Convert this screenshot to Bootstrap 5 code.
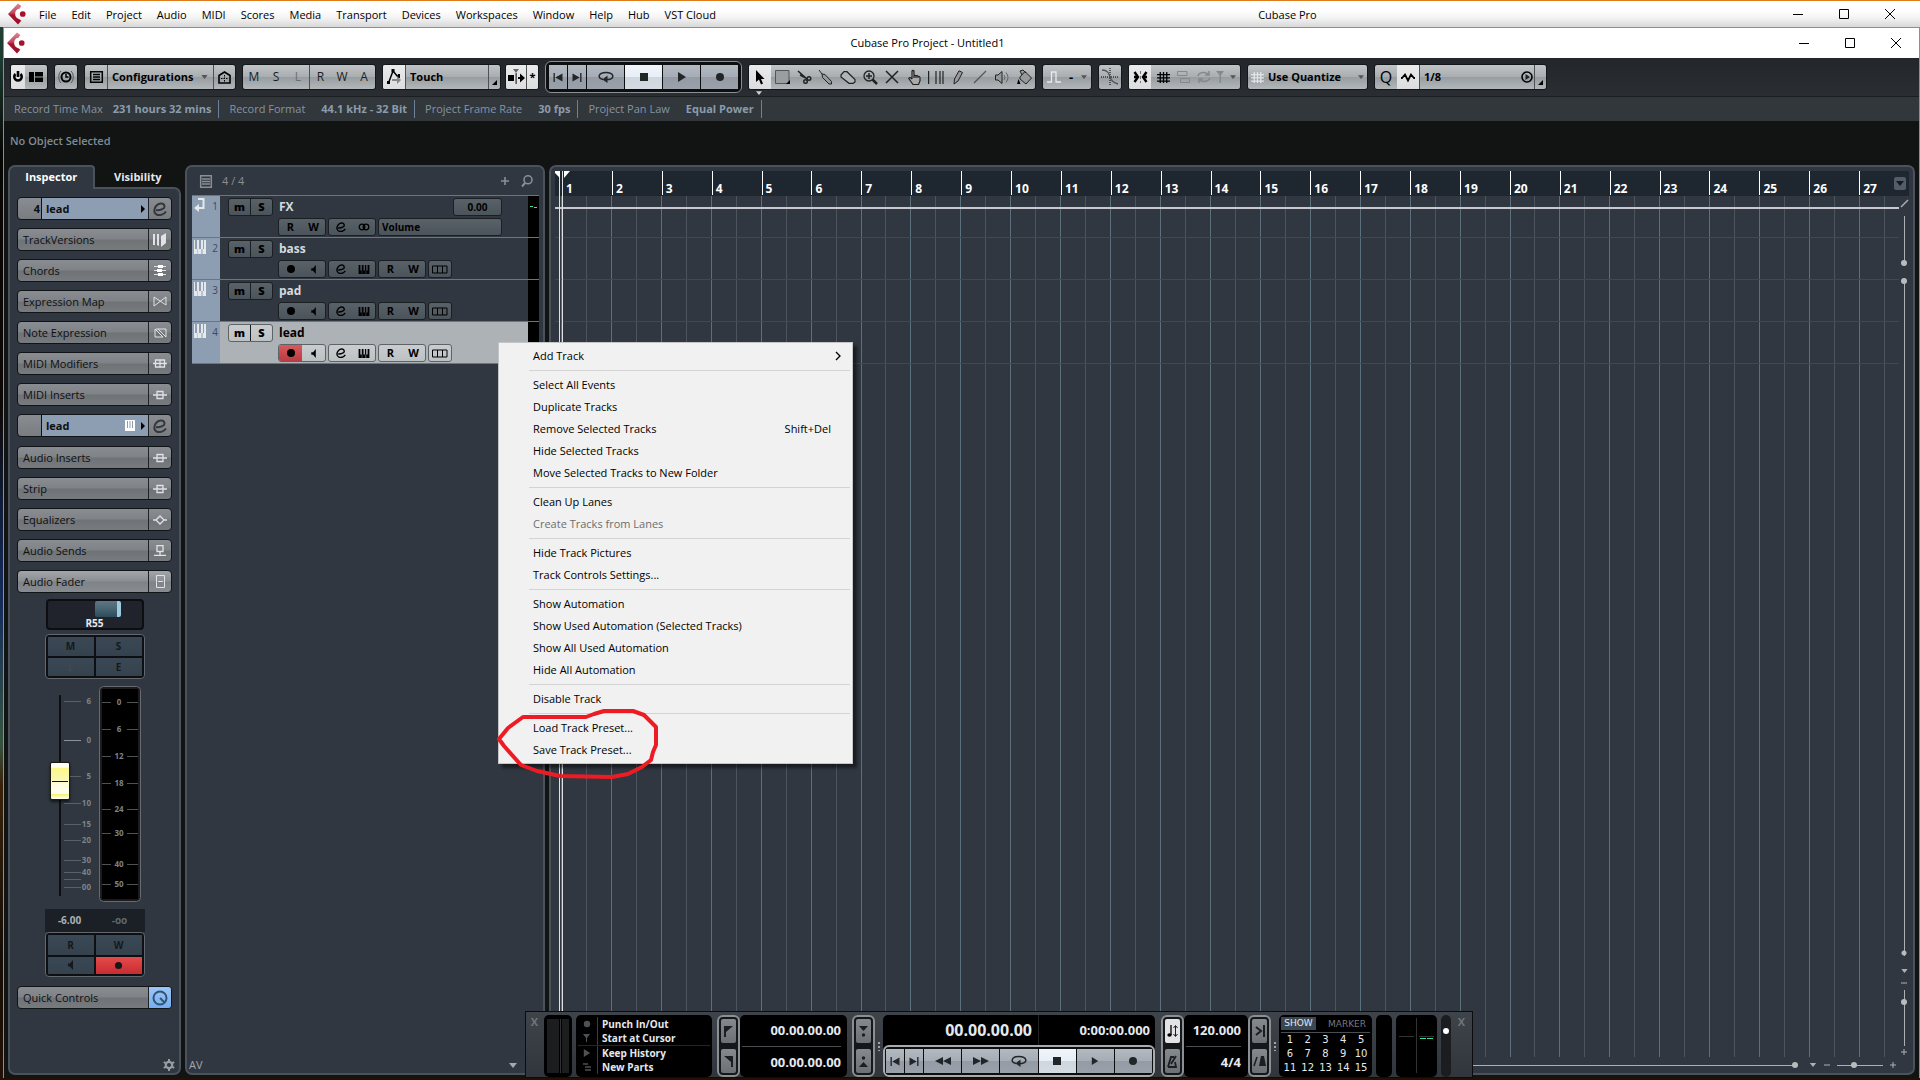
<!DOCTYPE html>
<html lang="en">
<head>
<meta charset="utf-8">
<meta name="viewport" content="width=device-width, initial-scale=1">
<title>Cubase Pro Project - Untitled1</title>
<link href="https://cdn.jsdelivr.net/npm/bootstrap@5.3.0/dist/css/bootstrap.min.css" rel="stylesheet">
<style>
:root{--panel:#303740;--edge:#4a525c;--orange:#e07b1a;--ui:"Open Sans","Noto Sans",sans-serif}
html,body{height:100%}
body{font:11px/16px var(--ui);color:#000;background:#160b08;overflow:hidden}
button,select,input{font:inherit;color:inherit;border:0;padding:0;margin:0;background:none;border-radius:0}
a{color:inherit;text-decoration:none}
svg{display:block;flex:none;overflow:visible}
b,.fw-b{font-weight:700}
select{appearance:none}
.s{fill:none;stroke:currentColor}
/* window frames */
.app-bar{height:27px;border-top:1px solid var(--orange);background:linear-gradient(#fff 35%,#f3f3f3 65%,#d8d8d8)}
.menu-list{gap:15px;padding-left:12px;padding-top:2px}
.app-name{padding:2px 0 0 84px}
.cap-btn{width:46px;height:26px;display:flex;align-items:center;justify-content:center}
.desk{background:linear-gradient(#1f4034,#1d3b30 3%,#060605 12%,#0d0805 36%,#0f1b38 45%,#142d5e 55%,#35543f 68%,#3a2208 72%,#150d05 88%,#241005);padding-left:3px;padding-bottom:2px}
.proj{border:solid var(--orange);border-width:1px 1px 0 1px;background:#121413}
.proj-title{height:30px;background:#fff}
/* toolbar */
.tools{height:39px;padding:0 6px;gap:6px;background:linear-gradient(#23272b,#2a2e32);border-bottom:1px solid #1b1e21}
.grp{display:flex;height:26px;border:1px solid #14171a;border-radius:3px;background:linear-gradient(#c0c4c7,#a9aeb1 48%,#979da0 52%,#b2b7ba);overflow:hidden}
.grp>button{display:flex;align-items:center;justify-content:center;width:22px}
.grp .on{background:linear-gradient(#e9eaec,#dcdddf)}
.grp .cut{border-left:1px solid #4c5155}
.letters{font-size:12px;color:#1b1d1f}
.corner{align-items:flex-end!important;padding-bottom:4px}
.grp .w12{width:12px}.grp .w14{width:14px}.grp .w20{width:20px}
.drop{display:flex;align-items:center;position:relative}
.drop select{font-weight:700;padding-left:4px;height:24px;outline:0}
.drop svg.arr{position:absolute;right:5px;pointer-events:none}
.pod{display:flex;padding:3px;border:1px solid #8b8f92;border-radius:6px;background:#0c0e10;gap:1px;height:32px}
.pod button{display:flex;align-items:center;justify-content:center;background:linear-gradient(#b3b9c1,#a6adb6 48%,#949ba4 52%,#9aa1aa);color:#222629;width:37px}
.pod .nar{width:18px}
.pod .lit{background:linear-gradient(#f0f5fb,#e8eef6 48%,#cfd6de 52%,#d4dbe3)}
.pod.wide{padding:2px 1px;border-width:2px;border-color:#a9acaf}
.pod.wide button:not(.nar){flex:1}
.info{height:24px;background:#32373c;color:#8295a3;padding-left:9px}
.info>div{display:flex;align-items:center;gap:16px;height:18px;border-right:1px solid #6a8299;padding:0 7px 0 1px;margin-right:9px}
.info>div:first-child{gap:10px}
.info b{color:#8a9cab}
.sel-line{height:44px;padding:12px 0 0 6px;color:#7d8c96;font-weight:600}
/* panels */
.work{padding:0 4px 3px 4px;gap:4px}
.pane{background:var(--panel);border:2px solid var(--edge);border-radius:7px}
.insp{width:173px}.tracks{width:360px}
.tabs{height:24px;margin-bottom:-2px;z-index:1}
.tabs a{display:block;text-align:center;width:88px;font-weight:700;color:#e6e9ec;line-height:24px;height:24px}
.tabs a.sel{background:var(--panel);border:2px solid var(--edge);border-bottom:0;border-radius:7px 4px 0 0;line-height:20px;color:#fff}
.insp .pane{border-top-left-radius:0;padding:8px 7px 0}
.stack{gap:8px}
.sec{display:flex;height:23px;border:1px solid #111417;border-radius:4px;overflow:hidden;background:linear-gradient(#898d91,#7f8387 48%,#6f7376 52%,#777b7f);color:#0d0f11}
.sec.brk{margin-top:1px}
.sec button:first-child{flex:1;text-align:left;padding-left:5px;line-height:20px}
.sec button:last-child{width:23px;border-left:1px solid #202326;display:flex;align-items:center;justify-content:center;color:#dfe3e6}
.sec.hd{background:linear-gradient(#898d91,#797d81)}
.sec.hd>span{width:23px;text-align:right;padding-right:1px;font-weight:700;line-height:22px}
.sec.hd button.nm{flex:1;background:#8d9eb2;border-left:1px solid #111;font-weight:700;text-align:left;padding:0 3px 0 4px;display:flex;align-items:center}
.sec.hd button:last-child{color:#33383c}
.sec.hi{background:linear-gradient(#a2a5a9,#8b8e92 48%,#7f8286 52%,#888b8f)}
.strip{width:100px;margin:6px auto 0}
.panbox{height:31px;margin:0 1px;border:2px solid #0c0e11;border-radius:4px;background:#20232b;color:#e6e9ec;font-weight:700;font-size:10px;line-height:12px;text-align:center}
.panbox i{display:block;width:26px;height:16px;margin-left:47px;border-radius:2px;border-right:4px solid #9fcbe0;background:linear-gradient(#5f7683,#486473 50%,#2c4c5c)}
.quad{display:grid;grid-template-columns:1fr 1fr;gap:2px;background:#0d0f12;border:1px solid #62686d;border-radius:4px;padding:2px;height:45px}
.quad button{background:linear-gradient(#3a4855,#35424e);color:#15181b;font-weight:700;font-size:10px;line-height:12px;display:flex;align-items:center;justify-content:center}
.quad .rec{background:linear-gradient(#e44a4c,#c82c30)}
.fader{height:217px}
.scale-txt{font:700 8px var(--ui);fill:#7c8388}
.vrange{appearance:none;-webkit-appearance:none;writing-mode:vertical-lr}
.vol{width:20px;height:201px;margin:9px 0 0 5px;background:linear-gradient(#0d0f11,#0d0f11) center/2px 100% no-repeat}
.vol::-webkit-slider-thumb{-webkit-appearance:none;width:20px;height:38px;border:1px solid #1b1b10;border-radius:2px;box-shadow:0 2px 3px #0009;background:linear-gradient(transparent 18px,#111 18px,#111 19px,transparent 19px) center/16px 100% no-repeat,linear-gradient(#fffff4 12%,#fbf88a 14%,#f9f7b0 45%,#fffee0 60%,#fffff0 85%,#f6f26e 87%,#fff)}
.readout{height:23px;margin-top:6px;background:#1b2026;color:#aab0b4;font-weight:700;font-size:10px;line-height:23px}
/* track list */
.th{height:28px;padding:0 10px 0 13px;color:#8a8f94}
.trk{height:42px;margin:0 4px 0 5px;border-top:1px solid #6f757a;display:flex}
.clr{width:28px;background:#8d9eb2;color:#3f4b58;padding:2px 2px 0 2px;font-size:10px}
.trk .lane{flex:1;padding:2px 26px 0 8px}
.trk .vu{width:11px;background:#000;padding-top:10px}
.trk b{font-size:12px;color:#d5dade;line-height:18px;padding-left:6px}
.bt{display:flex;height:18px;border:1px solid #1b1f22;border-radius:3px;background:linear-gradient(#5a6269,#4c545b);color:#000;font-weight:700;font-size:11px;line-height:14px;overflow:hidden}
.bt button,.bt .cell{flex:1;display:flex;align-items:center;justify-content:center}
.bt button+button.sp{border-left:1px solid #1b1f22}
.bt .cell,.bt select{font-size:10px}
.ms{width:45px}.pr{width:48px}.one{width:24px}
.ms button{font-weight:800}
.sub{gap:2px;padding:2px 0 0 50px}
.trk.act .lane{background:#adb2b6}
.trk.act b{color:#000}
.trk.act .bt{background:linear-gradient(#c9cdd0,#bcc1c4);border-color:#5e6367}
.trk.act .rec{background:linear-gradient(#d8595e,#b93c42)}
/* arrangement */
.arr-pane{padding:4px 4px 0;min-width:0}
.ruler{height:25px;background:#1e262f;padding-left:7px;color:#fff;font:700 12px/15px var(--ui)}
.ruler div{flex:1 1 0;border-left:1px solid #fff;height:24px;padding:10px 0 0 3px;min-width:0}
.ruler div:first-child{border-color:transparent}
.r-menu{right:3px;top:6px;width:12px;height:13px;background:#525d69;border-radius:2px}
.bars{inset:0;padding-left:6px}
.bars div{flex:50 1 0;border-left:1px solid #5c707c;background:linear-gradient(#4a5560,#4a5560) 50% 0/1px 100% no-repeat}
.bars div:last-child{flex-grow:40;background-position:62% 0}
.ln{height:42px;border-bottom:1px solid #3f4953}
.ln:first-child{padding-top:11px}
.ln i{display:block;height:2px;background:#c8c9d0}
.cursor{left:4px;top:0;bottom:0;width:4px;border:solid #dfe1e2;border-width:0 1px;z-index:1}
.vbar{width:10px;color:#adb0b3;padding-top:4px;padding-bottom:2px}
.zs{appearance:none;-webkit-appearance:none;height:6px;background:linear-gradient(#adb0b3,#adb0b3) center/100% 1px no-repeat}
.zs.vrange{width:6px;background-size:1px 100%}
.zs.ends{background:radial-gradient(circle at 3px 3px,#b9bbbd 2px,transparent 3px) 0 100%/6px 6px no-repeat,linear-gradient(#adb0b3,#adb0b3) center/1px 100% no-repeat}
.zs::-webkit-slider-thumb{-webkit-appearance:none;width:6px;height:6px;border-radius:50%;background:#b9bbbd}
.hbar{height:16px;color:#adb0b3;gap:7px;padding-right:13px}
/* context menu */
.ctx{left:498px;top:342px;width:355px;background:#f1f1f1;border:1px solid #c3c5c7;box-shadow:4px 4px 3px #0007;padding:2px 2px 2px 30px;z-index:5}
.ctx button{display:flex;justify-content:space-between;width:100%;height:22px;line-height:21px;padding:0 19px 0 4px}
.ctx hr{margin:3px 0;border:0;height:1px;background:#d3d3d3;opacity:1}
.ctx .off{color:#6d6d6d}
.mark-ring{left:492px;top:704px;z-index:6;pointer-events:none}
/* transport panel */
.tp{left:525px;bottom:2px;height:67px;background:linear-gradient(#3f444a,#31363c);border:1px solid #0b0c0e;padding:3px 4px 1px 2px;z-index:4;color:#e4e9ee}
.blk{background:#000;border-radius:5px;height:62px}
.tp .x{width:13px;font-weight:700;color:#6e757b;height:14px;line-height:14px}
.duo{width:23px;height:62px;border:2px solid #8b8f92;border-radius:6px;background:#15181b;padding:2px;display:flex;flex-direction:column;justify-content:space-between}
.duo button{height:24px;border-radius:2px;background:linear-gradient(#858a8f,#6c7176);color:#1c1f22;display:flex;align-items:center;justify-content:center}
.duo button.lit{background:#e2e3e4}
.num{font:700 13px/31px "Open Sans",sans-serif;text-align:right}
.num hr{margin:0;border:0;height:1px;background:#4a4e52;opacity:1}
.num .big{width:156px;font-size:16px;border-right:1px solid #222;padding-right:6px}
.opt{width:136px;padding:2px 2px;font-weight:700;font-size:10px;line-height:14px}
.opt>div{height:28px;padding-left:5px}
.opt .ics{width:15px;border-right:1px solid #3a3d40;color:#4e5255;display:flex;flex-direction:column;justify-content:space-around;margin-right:4px}
.pad{width:93px;padding:2px;font:10px/14px "DejaVu Sans",sans-serif}
.pad .nums{display:grid;grid-template-columns:repeat(5,1fr);text-align:center;border-top:1px solid #4a4e52}
.pad .hd1{font-size:9px;line-height:13px;height:15px}
</style>
</head>
<body class="d-flex flex-column position-relative">
<svg width="0" height="0" class="position-absolute">
<defs>
<linearGradient id="lg" x1="0" y1="0" x2="0" y2="1"><stop offset="0" stop-color="#d98a96"/><stop offset=".45" stop-color="#c4475c"/><stop offset=".55" stop-color="#a5122c"/><stop offset="1" stop-color="#9c1029"/></linearGradient>
<symbol id="logo" viewBox="0 0 20 22"><path fill="url(#lg)" d="M10.500 0L14 2.500L12 5.500C9 6 7.500 8 7.500 11C7.500 14 9.500 16 12 16.500L14 18L10.500 22L0 11Z"/><circle cx="15.500" cy="11" r="3" fill="#a5122c"/></symbol>
<symbol id="e" viewBox="0 0 14 14"><path fill="none" stroke="currentColor" stroke-width="2" d="M3 8.300C8 8.500 12 6.500 11.500 4C11 1 6.500 .5 3.500 3.500C.5 6.500 .5 11.500 4 12.700C7 13.700 11 12.500 13 9.500"/></symbol>
<symbol id="keys" viewBox="0 0 12 14"><path fill="#e6e9ec" d="M0 0H1V9H3V0H5V9H7V0H9V9H10V0H12V14H8.500V9H7.500V14H4V9H3.600V14H0Z"/></symbol>
<symbol id="keysb" viewBox="0 0 12 10"><path fill="currentColor" d="M0 0H2V6H3.500V0H5.500V6H7V0H8.500V6H10V0H12V10H8.400V6H7.800V10H4V6H3.600V10H0Z"/></symbol>
<symbol id="spk" viewBox="0 0 8 10"><path fill="currentColor" d="M1 3.500H3L6 0V10L3 6.500H1Z"/></symbol>
<symbol id="dot" viewBox="0 0 10 10"><circle cx="5" cy="5" r="4" fill="currentColor"/></symbol>
<symbol id="down" viewBox="0 0 8 5"><path fill="currentColor" d="M0 0H8L4 5Z"/></symbol>
<symbol id="ins" viewBox="0 0 14 10"><path stroke-width="1.300" fill="none" stroke="currentColor" d="M0 5H14M4 1.500H10V8.500H4Z"/></symbol>
<symbol id="cells" viewBox="0 0 16 9"><path fill="none" stroke="#000" d="M.5 1H15V8H.5ZM5.500 1V8M10.500 1V8"/></symbol>
<symbol id="tstart" viewBox="0 0 10 10"><path fill="currentColor" d="M0 0H1.500V10H0ZM2 5L10 .5V9.500Z"/></symbol>
<symbol id="tend" viewBox="0 0 10 10"><path fill="currentColor" d="M8.500 0H10V10H8.500ZM8 5L0 .5V9.500Z"/></symbol>
<symbol id="cyc" viewBox="0 0 16 12"><path fill="none" stroke="currentColor" stroke-width="1.500" d="M5 8.500C-1 7.500 0 1.500 8 1.500S17 7.500 11 8.500H9"/><path fill="currentColor" d="M9.500 4.500V12L4.500 8.500Z"/></symbol>
<symbol id="play" viewBox="0 0 8 10"><path fill="currentColor" d="M0 0L8 5L0 10Z"/></symbol>
<symbol id="hash" viewBox="0 0 14 14"><path fill="none" stroke="currentColor" stroke-width="1.400" d="M3.500 1V13M7 1V13M10.500 1V13M0 4H14M0 7.500H14M0 11H14" /></symbol>
<symbol id="crn" viewBox="0 0 5 5"><path fill="#000" d="M5 0V5H0Z"/></symbol>
</defs>
</svg>

<header class="app-bar d-flex align-items-center flex-shrink-0">
  <svg width="19" height="22" class="ms-2"><use href="#logo"/></svg>
  <nav class="menu-list d-flex">
    <a href="#">File</a><a href="#">Edit</a><a href="#">Project</a><a href="#">Audio</a><a href="#">MIDI</a><a href="#">Scores</a><a href="#">Media</a><a href="#">Transport</a><a href="#">Devices</a><a href="#">Workspaces</a><a href="#">Window</a><a href="#">Help</a><a href="#">Hub</a><a href="#">VST Cloud</a>
  </nav>
  <div class="app-name flex-grow-1 text-center">Cubase Pro</div>
  <div class="d-flex" style="margin-right:7px">
    <button class="cap-btn" aria-label="Minimize"><svg width="10" height="10"><path class="s" d="M0 5.500H10"/></svg></button>
    <button class="cap-btn" aria-label="Maximize"><svg width="10" height="10"><path class="s" d="M.5 .5H9.500V9.500H.5Z"/></svg></button>
    <button class="cap-btn" aria-label="Close"><svg width="10" height="10"><path class="s" d="M0 0L10 10M10 0L0 10"/></svg></button>
  </div>
</header>

<div class="desk flex-grow-1 d-flex flex-column" style="min-height:0">
<main class="proj flex-grow-1 d-flex flex-column" style="min-height:0">
  <div class="proj-title d-flex align-items-center flex-shrink-0">
    <svg width="19" height="22" style="margin-left:3px"><use href="#logo"/></svg>
    <div class="flex-grow-1 text-center ps-5">Cubase Pro Project - Untitled1</div>
    <div class="d-flex">
      <button class="cap-btn" aria-label="Minimize"><svg width="10" height="10"><path class="s" d="M0 5.500H10"/></svg></button>
      <button class="cap-btn" aria-label="Maximize"><svg width="10" height="10"><path class="s" d="M.5 .5H9.500V9.500H.5Z"/></svg></button>
      <button class="cap-btn" aria-label="Close"><svg width="10" height="10"><path class="s" d="M0 0L10 10M10 0L0 10"/></svg></button>
    </div>
  </div>

  <div class="tools d-flex align-items-center flex-shrink-0">
    <div class="grp"><button class="on w14" aria-label="Activate"><svg width="10" height="12"><path class="s" stroke-width="2.600" d="M2.500 3A3.700 3.700 0 1 0 7.500 3M5 0V6"/></svg></button><button aria-label="Layout"><svg width="14" height="10"><path d="M0 0H5V10H0ZM6 0H14V4.500H6ZM6 5.500H14V10H6Z"/></svg></button></div>
    <div class="grp"><button aria-label="Constrain delay"><svg width="16" height="14"><circle cx="8" cy="7" r="4.500" class="s" stroke-width="2"/><path class="s" stroke-width="1.500" d="M8 4V7H10.500"/><path class="s" style="stroke:#555" d="M3 1C0 4 0 10 3 13M13 1C16 4 16 10 13 13"/></svg></button></div>
    <div class="grp"><button aria-label="Window layout"><svg width="13" height="12"><path class="s" stroke-width="1.500" d="M.7 .7H12.300V11.300H.7ZM3 3.500H10M3 6H10M3 8.500H10"/></svg></button>
      <div class="drop cut"><select aria-label="Configurations" style="width:105px"><option>Configurations</option></select><svg class="arr" width="7" height="4" viewBox="0 0 8 5" color="#555"><use href="#down"/></svg></div>
      <button class="cut" aria-label="Home"><svg width="13" height="13"><path class="s" stroke-width="1.600" d="M1 12V4.500L6.500 1L12 4.500V12Z"/><path class="s" stroke-dasharray="1.500 1" d="M3 7.500H10M6.500 4V11"/></svg></button></div>
    <div class="grp letters"><button>M</button><button>S</button><button style="color:#6a6f73">L</button><button class="cut">R</button><button>W</button><button>A</button></div>
    <div class="d-flex" style="gap:4px">
      <div class="grp"><button class="on" aria-label="Automation mode"><svg width="15" height="16"><path class="s" stroke-width="1.500" d="M1.500 14L6 2L11 8"/><path d="M0 12H3V15H0ZM4.500 0H7.500V3H4.500ZM11 5H13V9H10Z"/><path fill="#888" d="M5 10H10V7L14 11L10 15V12H5Z"/></svg></button>
        <div class="drop cut"><select aria-label="Automation" style="width:82px"><option>Touch</option></select></div><button class="cut w12 corner" aria-label="Automation panel"><svg width="5" height="5"><use href="#crn"/></svg></button></div>
      <div class="grp"><button class="on w20" aria-label="Auto-scroll"><svg width="17" height="16"><path d="M0 6H6V12H0ZM7.600 4H8.600V15H7.600ZM10 8H12V4.500L17 9L12 13.500V10H10Z"/><path fill="#666" d="M5 0H11L8 4Z"/></svg></button><button class="on cut w12 fw-b">*</button></div>
    </div>
    <div class="pod"><button class="nar" aria-label="Go to start"><svg width="10" height="9"><use href="#tstart"/></svg></button><button class="nar" aria-label="Go to end"><svg width="10" height="9"><use href="#tend"/></svg></button><button aria-label="Cycle"><svg width="16" height="12"><use href="#cyc"/></svg></button><button class="lit" aria-label="Stop"><svg width="8" height="8"><path fill="#222629" d="M0 0H8V8H0Z"/></svg></button><button aria-label="Play"><svg width="8" height="10"><use href="#play"/></svg></button><button aria-label="Record"><svg width="10" height="10"><use href="#dot"/></svg></button></div>
    <div class="position-relative"><div class="grp" style="color:#222">
      <button class="on" aria-label="Object selection"><svg width="10" height="15"><path fill="#000" d="M1 0V12L4 9.500L6 14.500L8 13.500L6 9H9.500Z"/></svg></button>
      <button aria-label="Range"><svg width="15" height="14"><path fill="#9a9ea1" stroke="#555" d="M.5 .5H14V13.500H.5Z"/><path d="M15 10V14H11Z"/></svg></button>
      <button aria-label="Split"><svg width="15" height="14"><path class="s" stroke-width="1.600" d="M1 1L10 9M3 5L9 8"/><circle class="s" cx="12" cy="8.500" r="1.800" stroke-width="1.400"/><circle class="s" cx="8.500" cy="11.500" r="1.800" stroke-width="1.400"/></svg></button>
      <button aria-label="Glue"><svg width="14" height="15"><path class="s" d="M0 0L3 4L6 4.500L12.500 11.500V14H10L3.500 7.500L3 4" style="fill:#999"/></svg></button>
      <button aria-label="Erase"><svg width="16" height="13"><path class="s" stroke-width="1.200" d="M1 4L4 .7H7L15 8.500V11L13 12.300H9L1 6Z" style="fill:#b0b4b6"/></svg></button>
      <button aria-label="Zoom"><svg width="15" height="15"><circle class="s" cx="6" cy="6" r="5" stroke-width="1.300"/><path class="s" stroke-width="1.500" d="M3 6H9M6 3V9"/><path class="s" stroke-width="2.500" d="M9.500 9.500L14 14"/></svg></button>
      <button aria-label="Mute"><svg width="12" height="12"><path class="s" stroke-width="1.500" d="M0 0L12 12M12 0L0 12"/></svg></button>
      <button aria-label="Comp"><svg width="13" height="15"><path class="s" stroke-width="1.200" d="M4 9V1Q5 0 6 1V6Q7 5 8 6Q9 5 10 6.500Q12 6 12 8V11L10.500 14.500H5L.8 8.500Q1.500 7 3 8L4 9M6 6V8M8 6V8M10 7V8" style="fill:#aaa"/></svg></button>
      <button aria-label="Time warp"><svg width="16" height="13"><path class="s" stroke-width="1.200" d="M.6 0V13M8 0V13M12 0V13M15 0V13"/></svg></button>
      <button aria-label="Draw"><svg width="11" height="15"><path class="s" style="fill:#999" d="M1 14L1.500 9L6 .8L9.500 2.500L5 11Z"/></svg></button>
      <button aria-label="Line"><svg width="12" height="12"><path class="s" stroke-width="1.300" style="stroke:#555" d="M0 12L12 0"/></svg></button>
      <button aria-label="Play tool"><svg width="15" height="13"><path class="s" style="fill:#999" d="M.5 4H3L7 .5V12.500L3 9H.5Z"/><path class="s" style="stroke:#666" d="M9 4Q11 6.500 9 9M11 1.500Q15 6.500 11 11.500"/></svg></button>
      <button aria-label="Color"><svg width="15" height="15"><path class="s" style="fill:#999" d="M3 7L8 1.500L14.500 8L9 14L3 9ZM5 5L3 1L6 0L9 3"/><path d="M0 14L1.500 9L3.500 14Z"/></svg></button>
    </div><svg width="6" height="4" class="position-absolute" color="#cdd2dc" style="left:8px;top:27px"><use href="#down"/></svg></div>
    <div class="grp"><button aria-label="Color menu"><svg width="14" height="12"><path class="s" style="stroke:#e8eaec" stroke-width="1.300" d="M0 11H4.500V1H9V11H14"/></svg></button><button class="w12 fw-b" style="font-size:13px">-</button><button class="w14" aria-label="Colors"><svg width="6" height="4" color="#555"><use href="#down"/></svg></button></div>
    <div class="grp"><button aria-label="Snap zero crossing"><svg width="18" height="18"><path class="s" stroke-dasharray="1 1" d="M9 0V18M0 9H18"/><path class="s" style="stroke:#555" stroke-width="1.300" d="M1 2C7 2 8 6 9 9S13 15 17 16"/></svg></button></div>
    <div class="grp"><button class="on" aria-label="Snap"><svg width="13" height="12"><path class="s" stroke-width="2.400" d="M.5 1L4 6L.5 11M12.500 1L9 6L12.500 11M0 6H4M9 6H13"/><path class="s" style="stroke:#777" stroke-dasharray="3 2" d="M6.500 0V12"/></svg></button><button style="width:25px" aria-label="Grid"><svg width="13" height="13"><use href="#hash"/></svg></button><button class="w14" style="color:#85898c" aria-label="Events"><svg width="13" height="12"><path class="s" d="M.5 .5H10V4.500H.5ZM3.500 7.500H12.500V11.500H3.500Z"/></svg></button><button class="w20 ms-1" style="color:#85898c" aria-label="Shuffle"><svg width="14" height="12"><path class="s" stroke-width="1.500" d="M1 5C2 1 9 0 12 4M13 7C11 11 5 12 2 8M12 0V4H8M2 12V8H6"/></svg></button><button class="w12" style="color:#85898c" aria-label="Cursor"><svg width="8" height="12"><path fill="currentColor" d="M0 0H8L5 4V12H3.500V4Z"/></svg></button><button class="w14" aria-label="Snap type"><svg width="6" height="4" color="#555"><use href="#down"/></svg></button></div>
    <div class="grp drop"><svg width="13" height="13" color="#e2e5e8" style="margin-left:3px"><use href="#hash"/></svg><select aria-label="Grid type" style="width:103px"><option>Use Quantize</option></select><svg class="arr" width="6" height="4" color="#555" style="right:3px"><use href="#down"/></svg></div>
    <div class="grp"><button style="font-size:16px">Q</button><button class="on" aria-label="Iterative"><svg width="14" height="9"><path class="s" stroke-width="1.800" d="M0 5H1L4 1.500L7 7.500L10 1.500L13 5H14"/></svg></button><div class="drop cut"><select aria-label="Quantize" style="width:100px"><option>1/8</option></select></div><button class="w14" aria-label="Apply"><svg width="12" height="12"><circle cx="6" cy="6" r="5" class="s" stroke-width="1.600"/><path fill="#222" d="M4.500 3L9 6L4.500 9Z"/></svg></button><button class="cut w12 corner" aria-label="Quantize panel"><svg width="5" height="5"><use href="#crn"/></svg></button></div>
  </div>

  <div class="info d-flex align-items-center flex-shrink-0">
    <div>Record Time Max<b>231 hours 32 mins</b></div>
    <div>Record Format<b>44.1 kHz - 32 Bit</b></div>
    <div>Project Frame Rate<b>30 fps</b></div>
    <div>Project Pan Law<b>Equal Power</b></div>
  </div>
  <div class="sel-line flex-shrink-0">No Object Selected</div>

  <div class="work d-flex flex-grow-1" style="min-height:0">
    <!-- Inspector -->
    <aside class="insp d-flex flex-column flex-shrink-0">
      <nav class="tabs d-flex position-relative"><a href="#" class="sel">Inspector</a><a href="#" class="flex-grow-1">Visibility</a></nav>
      <div class="pane flex-grow-1 d-flex flex-column">
        <div class="stack d-flex flex-column">
          <div class="sec hd"><span>4</span><button class="nm"><span class="flex-grow-1">lead</span><svg width="4" height="8"><path d="M0 0L4 4L0 8Z"/></svg></button><button aria-label="Edit instrument"><svg width="14" height="14"><use href="#e"/></svg></button></div>
          <div class="sec"><button>TrackVersions</button><button aria-label="Versions"><svg width="14" height="14"><path fill="#dfe3e6" d="M0 1H2V12H0ZM4 1H6V13L4 12ZM8 3L13 0V10L8 14Z"/></svg></button></div>
          <div class="sec"><button>Chords</button><button aria-label="Chords"><svg width="12" height="13"><path class="s" d="M0 2.500H12M0 6.500H12M0 10.500H12"/><path fill="#fff" d="M4 1H9V4H4ZM3 5H8V8H3ZM4 9H9V12H4Z"/></svg></button></div>
          <div class="sec"><button>Expression Map</button><button aria-label="Expression"><svg width="14" height="11"><path class="s" d="M1 1V10L13 1V9Z"/></svg></button></div>
          <div class="sec"><button>Note Expression</button><button aria-label="Note expression"><svg width="13" height="10"><path class="s" d="M1 1V9H9ZM2 1H12V9L4 1"/></svg></button></div>
          <div class="sec"><button>MIDI Modifiers</button><button aria-label="Modifiers"><svg width="14" height="9"><path class="s" stroke-width="1.300" d="M0 4.500H14M2.500 1H11.500V8H2.500ZM7 1V8"/></svg></button></div>
          <div class="sec"><button>MIDI Inserts</button><button aria-label="MIDI inserts"><svg width="14" height="10"><use href="#ins"/></svg></button></div>
          <div class="sec hd"><span></span><button class="nm"><span class="flex-grow-1">lead</span><svg width="10" height="11" style="margin-right:6px"><path fill="#fff" d="M0 0H10V11H0Z"/><path stroke="#8d9eb2" d="M2.500 1V8M5 1V8M7.500 1V8"/></svg><svg width="4" height="8"><path d="M0 0L4 4L0 8Z"/></svg></button><button aria-label="Edit channel"><svg width="14" height="14"><use href="#e"/></svg></button></div>
          <div class="sec brk"><button>Audio Inserts</button><button aria-label="Audio inserts"><svg width="14" height="10"><use href="#ins"/></svg></button></div>
          <div class="sec"><button>Strip</button><button aria-label="Strip"><svg width="14" height="10"><use href="#ins"/></svg></button></div>
          <div class="sec"><button>Equalizers</button><button aria-label="EQ"><svg width="14" height="10"><path class="s" stroke-width="1.300" d="M0 5H3L7 1L11 5L7 9L3 5M11 5H14"/></svg></button></div>
          <div class="sec"><button>Audio Sends</button><button aria-label="Sends"><svg width="12" height="11"><path class="s" stroke-width="1.300" d="M3 .6H9V6.500H3ZM6 6.500V10M0 10.400H12"/></svg></button></div>
          <div class="sec hi"><button>Audio Fader</button><button aria-label="Fader"><svg width="9" height="13"><path class="s" d="M.5 .5H8.500V12.500H.5ZM2 6.500H7"/></svg></button></div>
        </div>
        <div class="strip">
          <div class="panbox"><i></i>R55</div>
          <div class="quad" style="margin-top:4px"><button>M</button><button>S</button><button style="color:#404a53">L</button><button>E</button></div>
          <div class="fader d-flex" style="margin-top:7px">
            <input type="range" class="vrange vol" aria-label="Volume fader" min="0" max="100" value="41">
            <svg width="28" height="217" class="flex-grow-1"><path stroke="#596067" d="M-6 15.500H11M0 90.500H11M-6 117.500H11M-6 138.500H11M-6 154.500H11M-6 174.500H11M-6 186.500H11M-6 193.500H11M-6 201.500H11"/><path stroke="#8d9296" d="M-6 54.500H11"/>
              <g class="scale-txt" text-anchor="end"><text x="21" y="18">6</text><text x="21" y="57">0</text><text x="21" y="93">5</text><text x="21" y="120">10</text><text x="21" y="141">15</text><text x="21" y="157">20</text><text x="21" y="177">30</text><text x="21" y="189">40</text><text x="21" y="204">00</text></g></svg>
            <svg width="42" height="217" style="margin-right:4px"><rect x=".5" y=".5" width="41" height="215" rx="4" fill="#1c1a1a" stroke="#666b70"/><rect x="3" y="3" width="36" height="210" fill="#000"/>
              <path stroke="#4c5256" d="M3 16.500H12M28 16.500H39M3 43.500H12M28 43.500H39M3 70.500H12M28 70.500H39M3 97.500H12M28 97.500H39M3 123.500H12M28 123.500H39M3 147.500H12M28 147.500H39M3 178.500H12M28 178.500H39M3 198.500H12M28 198.500H39"/>
              <g class="scale-txt" text-anchor="middle"><text x="20" y="19">0</text><text x="20" y="46">6</text><text x="20" y="73">12</text><text x="20" y="100">18</text><text x="20" y="126">24</text><text x="20" y="150">30</text><text x="20" y="181">40</text><text x="20" y="201">50</text></g></svg>
          </div>
          <div class="readout d-flex text-center"><span class="w-50">-6.00</span><span class="w-50" style="color:#60676c">-oo</span></div>
          <div class="quad"><button>R</button><button>W</button><button aria-label="Monitor"><svg width="8" height="10"><use href="#spk"/></svg></button><button class="rec" aria-label="Record enable"><svg width="9" height="9"><use href="#dot"/></svg></button></div>
        </div>
        <div class="sec" style="margin-top:9px"><button>Quick Controls</button><button aria-label="Quick controls" style="background:linear-gradient(#9cc6f8,#76aef2)"><svg width="16" height="16"><circle cx="8" cy="8" r="6.500" fill="none" stroke="#33536f" stroke-width="2"/><path stroke="#33536f" stroke-width="2" d="M8 8L12 12"/></svg></button></div>
        <button class="mt-auto" style="margin:0 -3px 2px auto" aria-label="Inspector setup"><svg width="12" height="12"><circle cx="6" cy="6" r="3.200" fill="none" stroke="#999da1" stroke-width="2.200"/><path stroke="#999da1" stroke-width="2" d="M6 0V2.500M6 9.500V12M.8 3L3 4.300M9 7.700L11.200 9M.8 9L3 7.700M9 4.300L11.200 3"/></svg></button>
      </div>
    </aside>

    <!-- Track list -->
    <section class="tracks pane d-flex flex-column flex-shrink-0">
      <div class="th d-flex align-items-center">
        <svg width="12" height="13"><path class="s" stroke-width="1.500" d="M.7 .7H11.300V12.300H.7ZM2 4H10M2 6.500H10M2 9H10"/></svg><span class="flex-grow-1" style="padding-left:10px">4 / 4</span>
        <button style="margin-right:12px" aria-label="Add track"><svg width="8" height="8"><path class="s" stroke-width="1.600" d="M4 0V8M0 4H8"/></svg></button>
        <button aria-label="Find track"><svg width="12" height="12"><circle class="s" cx="7" cy="4.800" r="4" stroke-width="1.600"/><path class="s" stroke-width="2" d="M4 8L1 11.500"/></svg></button>
      </div>
      <div class="trk"><div class="clr d-flex justify-content-between"><svg width="11" height="14"><path fill="none" stroke="#e6e9ec" stroke-width="2" d="M4 1H9.500V10H4"/><path fill="#e6e9ec" d="M5 6V14L0 10Z"/></svg><span>1</span></div>
        <div class="lane"><div class="d-flex"><div class="bt ms"><button>m</button><button class="sp">S</button></div><b class="flex-grow-1">FX</b><div class="bt" style="width:49px"><span class="cell">0.00</span></div></div>
          <div class="sub d-flex"><div class="bt pr"><button>R</button><button>W</button></div><div class="bt pr"><button aria-label="Edit"><svg width="10" height="10" viewBox="0 0 14 14"><use href="#e"/></svg></button><button aria-label="Link"><svg width="12" height="8"><circle class="s" cx="4" cy="4" r="2.800" stroke-width="1.300"/><circle class="s" cx="8" cy="4" r="2.800" stroke-width="1.300"/></svg></button></div><div class="bt flex-grow-1"><select aria-label="Parameter" class="w-100" style="padding-left:3px"><option>Volume</option></select></div></div></div>
        <div class="vu"><svg width="11" height="3"><path stroke="#37e0a0" d="M2 .5H5M6 1.500H9"/></svg></div></div>
      <div id="midi"></div>
      <div style="border-top:1px solid #6f757a;margin:0 15px 0 5px"></div>
      <div class="mt-auto d-flex justify-content-between align-items-center" style="color:#a4a9ad;padding:0 26px 0 2px">AV<svg width="8" height="5"><use href="#down"/></svg></div>
    </section>

    <!-- Arrangement -->
    <section class="arr-pane pane flex-grow-1 d-flex flex-column">
      <div class="flex-grow-1 d-flex flex-column position-relative">
        <div class="ruler d-flex position-relative" id="ruler"></div>
        <button class="r-menu position-absolute d-flex align-items-center justify-content-center" aria-label="Ruler format"><svg width="8" height="5" color="#161b21"><use href="#down"/></svg></button>
        <div class="flex-grow-1 d-flex">
          <div class="flex-grow-1 position-relative"><div class="bars position-absolute d-flex" id="bars"></div>
            <div class="position-relative"><div class="ln"><i></i></div><div class="ln"></div><div class="ln"></div><div class="ln"></div></div></div>
          <div class="vbar d-flex flex-column align-items-center">
            <svg width="8" height="8"><path class="s" stroke-width="1.500" d="M1 7L8 0"/></svg>
            <input type="range" class="zs vrange" aria-label="Waveform zoom" style="height:50px;margin-top:8px" value="100">
            <input type="range" class="zs vrange ends flex-grow-1" aria-label="Vertical scroll" style="margin-top:12px" value="0">
            <svg width="7" height="4" style="margin-top:13px" viewBox="0 0 8 5"><use href="#down"/></svg>
            <svg width="6" height="2" style="margin-top:9px"><path class="s" d="M0 1H6"/></svg>
            <input type="range" class="zs vrange" aria-label="Vertical zoom" style="height:56px;margin-top:6px" value="18">
            <svg width="6" height="6" style="margin-top:3px"><path class="s" d="M0 3H6M3 0V6"/></svg>
          </div>
        </div>
        <div class="cursor position-absolute"></div>
        <svg width="15" height="8" class="position-absolute" style="left:0;top:0;z-index:2"><path fill="#fff" d="M0 0H15L9 7V0H5V7L0 2Z"/></svg>
      </div>
      <div class="hbar d-flex align-items-center"><input type="range" class="zs flex-grow-1" aria-label="Horizontal scroll" value="100"><svg width="8" height="4" class="ms-1"><use href="#down"/></svg><svg width="6" height="2"><path class="s" d="M0 1H6"/></svg><input type="range" class="zs" style="width:46px" aria-label="Horizontal zoom" value="34"><svg width="6" height="6"><path class="s" d="M0 3H6M3 0V6"/></svg></div>
    </section>
  </div>
</main>
</div>

<!-- Track context menu -->
<div class="ctx position-absolute">
  <button>Add Track<svg width="5" height="8" style="margin:7px -10px 0 0"><path class="s" stroke-width="1.300" d="M0 0L4 4L0 8"/></svg></button><hr>
  <button>Select All Events</button><button>Duplicate Tracks</button><button>Remove Selected Tracks<span>Shift+Del</span></button><button>Hide Selected Tracks</button><button>Move Selected Tracks to New Folder</button><hr>
  <button>Clean Up Lanes</button><button class="off">Create Tracks from Lanes</button><hr>
  <button>Hide Track Pictures</button><button>Track Controls Settings...</button><hr>
  <button>Show Automation</button><button>Show Used Automation (Selected Tracks)</button><button>Show All Used Automation</button><button>Hide All Automation</button><hr>
  <button>Disable Track</button><hr>
  <button>Load Track Preset...</button><button>Save Track Preset...</button>
</div>
<svg class="mark-ring position-absolute" width="172" height="78"><path fill="none" stroke="#ed1c24" stroke-width="4" stroke-linejoin="round" d="M31 13H94L102 10L112 7H141L152 11L164 23V41L161 48L159 56L150 63L136 70L120 73L68 72L45 67L29 61L12 42L7 35L16 24Z"/></svg>

<!-- Transport panel -->
<div class="tp position-absolute d-flex">
  <button class="x" aria-label="Close left">X</button>
  <div class="blk me-1" style="width:28px;padding:4px 3px;margin-left:3px"><svg width="22" height="54"><path fill="#1c1d1e" d="M0 0H12V54H0ZM15 0H22V54H15Z"/><path stroke="#333" d="M13.500 0V54"/></svg></div>
  <div class="blk opt">
    <div class="d-flex"><span class="ics"><svg width="8" height="8"><use href="#dot"/></svg><svg width="7" height="8"><path fill="currentColor" d="M0 0H7L4 4V8H3V4Z"/></svg></span><span>Punch In/Out<br>Start at Cursor</span></div>
    <hr class="m-0" style="color:#999">
    <div class="d-flex"><span class="ics"><svg width="8" height="8"><use href="#play"/></svg><svg width="8" height="8"><path class="s" stroke-width="1.500" d="M0 1H5M2 4H8M2 7H8"/></svg></span><span>Keep History<br>New Parts</span></div>
  </div>
  <div class="duo" style="margin-left:5px"><button aria-label="Left locator"><svg width="9" height="11"><path d="M0 0H9L2 6V11H0Z" fill="currentColor"/></svg></button><button aria-label="Right locator"><svg width="9" height="11"><path d="M0 0H9V11H7V6Z" fill="currentColor"/></svg></button></div>
  <div class="blk num" style="width:107px;padding:0 6px 0 2px">00.00.00.00<hr>00.00.00.00</div>
  <div class="duo" style="margin-left:5px"><button aria-label="Punch in"><svg width="9" height="11"><path d="M0 0H9L4.500 5Z" fill="currentColor"/><circle cx="4.500" cy="9" r="1.700" fill="currentColor"/></svg></button><button aria-label="Punch out"><svg width="9" height="11"><path d="M0 11H9L4.500 6Z" fill="currentColor"/><circle cx="4.500" cy="2" r="1.700" fill="currentColor"/></svg></button></div>
  <svg width="8" height="62"><path stroke="#a0a4a8" stroke-width="2" stroke-dasharray="2 2" d="M4 27V36"/></svg>
  <div class="blk" style="width:272px">
    <div class="d-flex num" style="height:30px"><span class="big">00.00.00.00</span><span class="flex-grow-1" style="padding-right:5px">0:00:00.000</span></div>
    <div class="pod wide"><button class="nar" aria-label="To left locator"><svg width="10" height="9"><use href="#tstart"/></svg></button><button class="nar" aria-label="To right locator"><svg width="10" height="9"><use href="#tend"/></svg></button><button aria-label="Rewind"><svg width="16" height="8"><path fill="currentColor" d="M8 0V8L0 4ZM16 0V8L8 4Z"/></svg></button><button aria-label="Forward"><svg width="16" height="8"><path fill="currentColor" d="M0 0V8L8 4ZM8 0V8L16 4Z"/></svg></button><button aria-label="Cycle"><svg width="16" height="12"><use href="#cyc"/></svg></button><button class="lit" aria-label="Stop"><svg width="8" height="8"><path fill="#222629" d="M0 0H8V8H0Z"/></svg></button><button aria-label="Play"><svg width="8" height="8"><use href="#play"/></svg></button><button aria-label="Record"><svg width="10" height="10"><use href="#dot"/></svg></button></div>
  </div>
  <div class="duo" style="margin-left:6px"><button class="lit" aria-label="Tempo track"><svg width="11" height="14"><path class="s" d="M4 1V11" stroke-width="1.500"/><ellipse cx="2.500" cy="11" rx="2.200" ry="1.800"/><path class="s" d="M8.500 2V12M6.500 4L8.500 1.500L10.500 4M6.500 10L8.500 12.500L10.500 10"/></svg></button><button aria-label="Metronome"><svg width="11" height="13"><path class="s" stroke-width="1.800" d="M1 12L4 2H7M1 12H9L8 7M4 9L9 1"/></svg></button></div>
  <div class="blk num" style="width:64px;padding:0 7px 0 2px">120.000<hr>4/4</div>
  <div class="duo"><button aria-label="Sync"><svg width="10" height="12"><path class="s" stroke-width="2" d="M1 2L6 6L1 10M9 0V12"/></svg></button><button aria-label="Precount"><svg width="12" height="10"><path d="M5 10L7 0H10L12 10Z" fill="currentColor"/><path class="s" stroke-width="1.500" d="M0 10L3 1"/></svg></button></div>
  <svg width="8" height="62"><path stroke="#a0a4a8" stroke-width="2" stroke-dasharray="2 2" d="M4 27V36"/></svg>
  <div class="blk pad"><div class="hd1 d-flex justify-content-between"><button style="width:35px;height:13px;background:#3a4855">SHOW</button><button style="color:#75797c;padding-right:4px">MARKER</button></div>
    <div class="nums"><span>1</span><span>2</span><span>3</span><span>4</span><span>5</span><span>6</span><span>7</span><span>8</span><span>9</span><span>10</span><span>11</span><span>12</span><span>13</span><span>14</span><span>15</span></div></div>
  <div class="blk mx-1" style="width:16px"></div>
  <div class="blk" style="width:41px"><svg width="41" height="62"><path stroke="#333" d="M20.500 3V58M3 21.500H18"/><path stroke="#333" d="M23 21.500H38"/><path stroke="#37e0a0" d="M24 23.500H30M31 23.500H37"/></svg></div>
  <div class="blk ms-1" style="width:10px;background:#1b1d20"><svg width="10" height="62"><circle cx="5" cy="16" r="3" fill="#fff"/></svg></div>
  <button class="x" style="margin-left:4px" aria-label="Close right">X</button>
</div>

<script src="https://cdn.jsdelivr.net/npm/bootstrap@5.3.0/dist/js/bootstrap.bundle.min.js"></script>
<script>
const bars = Array.from({length: 27}, (_, i) => i + 1);
document.getElementById('ruler').innerHTML = bars.map(n => `<div>${n}</div>`).join('');
document.getElementById('bars').innerHTML = bars.map(() => '<div></div>').join('');
document.getElementById('midi').innerHTML = ['bass', 'pad', 'lead'].map((name, i) => `
<div class="trk${name === 'lead' ? ' act' : ''}">
  <div class="clr d-flex justify-content-between"><svg width="12" height="14"><use href="#keys"/></svg><span>${i + 2}</span></div>
  <div class="lane"><div class="d-flex"><div class="bt ms"><button>m</button><button class="sp">S</button></div><b>${name}</b></div>
    <div class="sub d-flex">
      <div class="bt pr"><button class="rec" aria-label="Record enable"><svg width="10" height="10"><use href="#dot"/></svg></button><button aria-label="Monitor"><svg width="8" height="9"><use href="#spk"/></svg></button></div>
      <div class="bt pr"><button aria-label="Edit"><svg width="10" height="10"><use href="#e"/></svg></button><button aria-label="Instrument"><svg width="12" height="9"><use href="#keysb"/></svg></button></div>
      <div class="bt pr"><button>R</button><button>W</button></div>
      <div class="bt one"><button aria-label="Lanes"><svg width="16" height="9"><use href="#cells"/></svg></button></div>
    </div></div>
  <div class="vu"></div>
</div>`).join('');
</script>
</body>
</html>
